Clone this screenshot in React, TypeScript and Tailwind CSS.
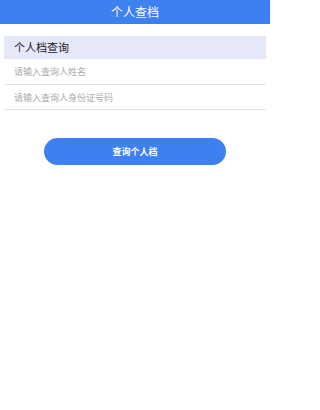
export default function App() {
  return (
    <div
      className="w-[270px] h-[410px] bg-white flex flex-col"
      style={{ fontFamily: '"Noto Sans CJK SC", "Noto Sans", sans-serif' }}
    >
      <header className="h-6 bg-[#3d80f0] flex items-center justify-center text-white text-[12px] leading-none">
        个人查档
      </header>
      <section className="mt-3 mx-1 flex flex-col">
        <div className="h-[23px] bg-[#e4e8f8] flex items-center px-[10px] text-[11px] text-[#222]">
          个人档查询
        </div>
        <input
          className="block w-full h-[26px] px-[10px] text-[9px] outline-none border-b border-[#e2e2e2] placeholder:text-[#ababab]"
          placeholder="请输入查询人姓名"
        />
        <input
          className="block w-full h-[25px] px-[10px] text-[9px] outline-none border-b border-[#e2e2e2] placeholder:text-[#ababab]"
          placeholder="请输入查询人身份证号码"
        />
      </section>
      <div className="flex justify-center mt-7">
        <button className="w-[182px] h-[27px] rounded-full bg-[#3d80f0] text-white text-[9px] font-semibold">
          查询个人档
        </button>
      </div>
    </div>
  );
}
